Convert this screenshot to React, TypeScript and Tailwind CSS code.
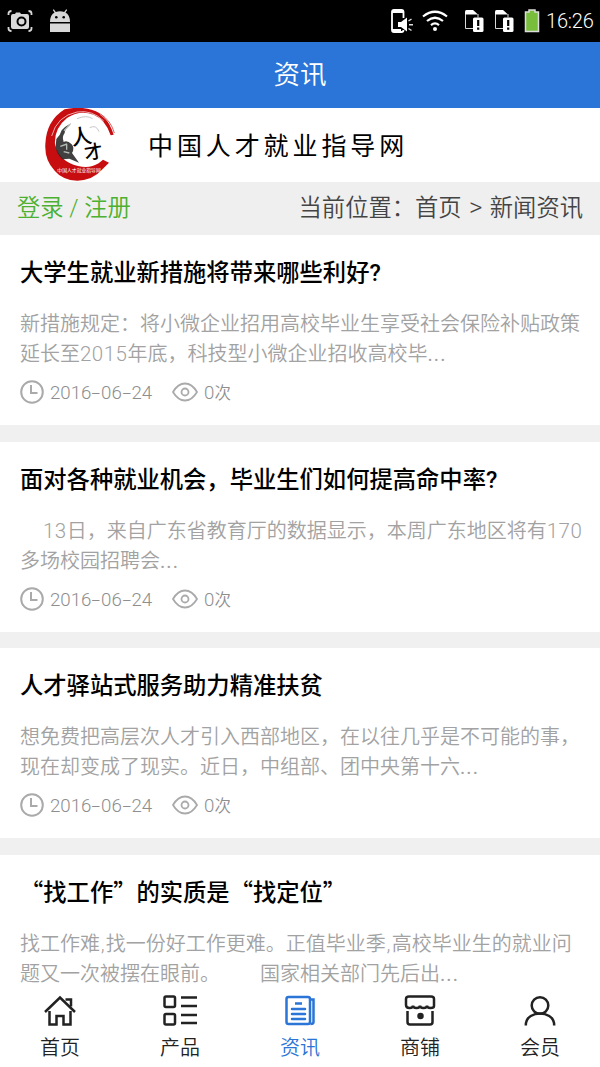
import React from "react";

type Article = {
  title: string;
  lines: string[];
  indent?: boolean;
  date?: string[];
};

const articles: Article[] = [
  {
    title: "大学生就业新措施将带来哪些利好?",
    lines: ["新措施规定：将小微企业招用高校毕业生享受社会保险补贴政策", "延长至2015年底，科技型小微企业招收高校毕..."],
    date: ["2016", "06", "24"],
  },
  {
    title: "面对各种就业机会，毕业生们如何提高命中率?",
    lines: ["13日，来自广东省教育厅的数据显示，本周广东地区将有170", "多场校园招聘会..."],
    indent: true,
    date: ["2016", "06", "24"],
  },
  {
    title: "人才驿站式服务助力精准扶贫",
    lines: ["想免费把高层次人才引入西部地区，在以往几乎是不可能的事，", "现在却变成了现实。近日，中组部、团中央第十六..."],
    date: ["2016", "06", "24"],
  },
  {
    title: "“找工作”的实质是“找定位”",
    lines: ["找工作难,找一份好工作更难。正值毕业季,高校毕业生的就业问", "题又一次被摆在眼前。\u3000\u3000国家相关部门先后出..."],
  },
];

const SimIcon = () => (
  <svg className="h-[24px] w-[20px]" viewBox="0 0 20 24" fill="none">
    <path d="M1 5V2.500Q1 1 2.500 1H9l5 4.500H1z" fill="#fff" />
    <path d="M1.500 5v14.500H9M14 5v3.500" stroke="#d8d8d8" />
    <rect x="9" y="8.500" width="10.500" height="14.500" rx="1.500" fill="#fff" />
    <path d="M14.200 11v6M14.200 18.500v2.200" stroke="#000" strokeWidth="2.200" />
  </svg>
);

const StatusBar = () => (
  <div className="flex h-[42px] shrink-0 items-center bg-black pl-[7px] pr-[6px] text-white">
    <svg className="h-[24px] w-[26px]" viewBox="0 0 26 24" fill="none">
      <path
        d="M1.500 6V4.500q0-2.500 3-2.500M21.500 2q3 0 3 2.500V6M1.500 18v1.500q0 2.500 3 2.500M21.500 22q3 0 3-2.500V18"
        stroke="#d8d8d8"
        strokeWidth="1.800"
      />
      <path d="M6 5h2l1-1.500h4L14 5h6q2 0 2 2v11q0 2-2 2H6q-2 0-2-2V7q0-2 2-2z" fill="#d8d8d8" />
      <circle cx="14.500" cy="12.500" r="4" fill="#d8d8d8" stroke="#000" strokeWidth="2" />
    </svg>
    <svg className="ml-[17px] h-[24px] w-[20px]" viewBox="0 0 20 24">
      <path d="M0 13Q0 6 4.500 3.500L2.800 1l1-.8L5.800 3Q10 1.500 14.200 3l2-2.800 1 .8-1.700 2.500Q20 6 20 13z" fill="#d8d8d8" />
      <path d="M0 14.500h20V23H0z" fill="#d8d8d8" />
      <circle cx="6.300" cy="8.200" r="1.300" />
      <circle cx="13.700" cy="8.200" r="1.300" />
    </svg>
    <div className="ml-auto flex items-center">
      <svg className="h-[24px] w-[23px]" viewBox="0 0 23 24" fill="none">
        <path
          d="M12.500 9V3q0-2-2-2H3Q1 1 1 3v18q0 2 2 2h7.500q2 0 2-2"
          stroke="#fff"
          strokeWidth="1.800"
        />
        <path d="M1 2h11v2H1zM1 20h9v3H1z" fill="#fff" />
        <path d="M7 13h3l6-4.500v14L10 18H7z" fill="#fff" />
        <path d="m17.500 12 3-2M18 15.800h4M17.500 19.500l3 2" stroke="#ddd" strokeWidth="1.500" />
      </svg>
      <svg className="ml-[8px] mr-px h-[24px] w-[26px]" viewBox="0 0 26 24" fill="none" stroke="#fff" strokeWidth="2.200">
        <path d="M1 7.500q12-9.500 24 0M5 12q8-6.500 16 0M9 16.200q4-3.500 8 0" />
        <circle cx="13" cy="20" r="2" fill="#fff" stroke="none" />
      </svg>
      <div className="ml-[15px] flex gap-[10px]">
        <SimIcon />
        <SimIcon />
      </div>
      <svg className="ml-[10px] h-[24px] w-[16px]" viewBox="0 0 16 24">
        <path d="M5 3V1h6v2h3.500v19.500h-13V3z" fill="#78bd3b" stroke="#ddd" strokeWidth="1.500" />
      </svg>
      <span className="ml-[6px] w-[48px] whitespace-nowrap font-['Roboto',sans-serif] text-[20px] leading-none font-light tracking-[-0.2px]">
        16:26
      </span>
    </div>
  </div>
);

const Logo = () => (
  <svg className="h-[74px] w-[74px]" viewBox="40 24 222 222">
    <path
      d="M252 104Q232 42 188 30Q152 18 105 28Q50 62 47 132Q44 180 75 212Q98 240 143 242Q190 240 216 210L238 188L220 179L207 190Q180 207 145 198Q88 185 76 133Q73 85 112 54Q150 29 192 44Q228 59 243 106z"
      fill="#c80d10"
    />
    <path
      d="M66 108Q82 48 142 36Q188 29 222 63M211 43Q244 66 256 96M228 80l12 28"
      fill="none"
      stroke="#fff"
      strokeWidth="2"
    />
    <path d="M212 42Q244 62 254 99" fill="none" stroke="#c80d10" strokeWidth="2" />
    <path
      d="M80 117Q91 108 96 91Q105 80 125 69Q106 85 105 99Q96 110 102 126Q112 119 126 133Q136 144 127 159L148 188L119 176L98 178Q80 162 78 139z"
      fill="#252525"
      opacity=".88"
    />
    <path d="M103 92l19-19M92 139l20-7M102 155l17 4M111 131v18" stroke="#b5bbb5" strokeWidth="4" />
    <path d="M142 56Q170 44 189 56M180 83q20-10 28 12" fill="none" stroke="#aaa" strokeWidth="2" />
    <text x="124" y="133" fontSize="62" fontWeight="500" fontFamily="Noto Sans CJK SC, sans-serif" transform="rotate(-9 150 110)">
      人
    </text>
    <text x="162" y="176" fontSize="56" fontWeight="500" fontFamily="Noto Sans CJK SC, sans-serif" transform="rotate(-9 190 150)">
      才
    </text>
    <text x="83" y="217" fontSize="14.500" fontWeight="400" fill="#fff" fontFamily="Noto Sans CJK SC, sans-serif">
      中国人才就业指导网
    </text>
  </svg>
);

const Dash = () => <span className="inline-block w-[9.600px] scale-x-[1.7] text-center">-</span>;

// Digits and dots are set slightly wider than the Chinese text around them
const Mixed = ({ text }: { text: string }) => (
  <>
    {text.split(/([0-9]+|\.+|,)/).map((part, i) => {
      if (part === ",") {
        return (
          <span key={i} className="ml-[0.700px] tracking-[1.300px]">
            ,
          </span>
        );
      }
      if (part.startsWith(".")) {
        return (
          <span key={i} className="font-normal tracking-[1.100px]">
            {part}
          </span>
        );
      }
      return /^[0-9]+$/.test(part) ? (
        <span key={i} className="text-[20.500px] tracking-[0.500px]">
          {part}
        </span>
      ) : (
        part
      );
    })}
  </>
);

const ArticleCard = ({ article }: { article: Article }) => (
  <article className={`shrink-0 bg-white px-5 pt-5 ${article.date ? "h-[190px]" : "h-[135px]"}`}>
    <h2
      className={`h-[36px] whitespace-nowrap text-[23.300px] font-medium text-black ${
        article.title.startsWith("“") ? "font-['Noto_Sans_CJK_SC',sans-serif] leading-[33px]" : "leading-[36px]"
      }`}
    >
      {article.title}
    </h2>
    <div className="mt-[18px] whitespace-nowrap text-[20px] leading-[30px] text-[#a2a2a2]">
      <p className={article.indent ? "pl-[23px]" : ""}>
        <Mixed text={article.lines[0]} />
      </p>
      <p>
        <Mixed text={article.lines[1]} />
      </p>
    </div>
    {article.date && (
      <div className="mt-[11px] flex h-6 items-center text-[18.700px] text-[#8e8e8e]">
        <svg className="h-6 w-6" viewBox="0 0 24 24" fill="none" stroke="#aaa" strokeWidth="2">
          <circle cx="12" cy="12" r="10.800" />
          <path d="M11 5v8h6.500" />
        </svg>
        <span className="ml-[6px] mt-[2px] w-[103px] whitespace-nowrap">
          {article.date[0]}
          <Dash />
          {article.date[1]}
          <Dash />
          {article.date[2]}
        </span>
        <svg className="ml-[19px] h-6 w-[26px]" viewBox="0 0 26 24" fill="none" stroke="#aaa" strokeWidth="1.800">
          <path d="M1 12Q6 3.500 13 3.500T25 12Q20 20.500 13 20.500T1 12z" />
          <circle cx="13" cy="12" r="3.500" />
        </svg>
        <span className="ml-[6px] mt-[2px]">
          0<span className="text-[16.500px]">次</span>
        </span>
      </div>
    )}
  </article>
);

const tabs = [
  {
    label: "首页",
    icon: (
      <>
        <path d="m1 17 15-14.500L31 17M5.500 16v13.500h7V21h7v8.500h7V16" />
        <path d="M21.500 4.500h5.500v7" />
      </>
    ),
  },
  {
    label: "产品",
    icon: (
      <>
        <rect x="1.500" y="1.500" width="10.500" height="10.500" rx="1.500" />
        <rect x="1.500" y="19" width="10.500" height="10.500" rx="1.500" />
        <path d="M18 2.500h16M18 11h16M18 20h16M18 28h16" />
      </>
    ),
  },
  {
    label: "资讯",
    active: true,
    icon: (
      <>
        <rect x="2.500" y="2" width="23.500" height="27" rx="2" />
        <path d="M26.500 4.500h3V27q0 2-3 2M11 8.500h7" />
        <path d="M8 14h13M8 19h13M8 24h13" strokeLinecap="round" />
      </>
    ),
  },
  {
    label: "商铺",
    icon: (
      <>
        <path d="M2 9V4q0-2.500 3-2.500h22q3 0 3 2.500v7q0 2-3.500 2-3.500 0-3.500-2.500 0 2.500-3.500 2.500T16 10.500q0 2.500-3.500 2.500T9 10.500Q9 13 5.500 13T2 10z" />
        <path d="M3.500 16v11q0 2.500 2.500 2.500h20q2.500 0 2.500-2.500V16" />
        <circle cx="16.500" cy="21" r="2" fill="currentColor" />
      </>
    ),
  },
  {
    label: "会员",
    icon: (
      <>
        <circle cx="16" cy="10.500" r="8.300" />
        <path d="M1.800 30.500q0-6.500 5-9.500 4-2.500 9.200-2.500t9.200 2.500q5 3 5 9.500" />
      </>
    ),
  },
];

export default function App() {
  return (
    <div className="flex h-[1067px] w-[600px] flex-col overflow-hidden bg-white font-['Roboto','Noto_Sans_CJK_SC',sans-serif] font-[350] [text-spacing-trim:space-all]">
      <StatusBar />
      <header className="flex h-[66px] shrink-0 items-center justify-center bg-[#2a75d7] text-[26.500px] text-white">
        资讯
      </header>
      <div className="flex h-[74px] shrink-0 items-center bg-white pl-[43px]">
        <Logo />
        <span className="ml-[31px] mt-[3px] whitespace-nowrap text-[25px] font-normal tracking-[3.900px] text-black">
          中国人才就业指导网
        </span>
      </div>
      <div className="flex h-[53px] shrink-0 items-center justify-between bg-[#efefef] px-[17px] text-[23.300px]">
        <span className="text-[#4cb030]">登录 / 注册</span>
        <span className="text-[#444]">
          当前位置：首页<span className="mx-[1px] text-[26px] leading-none"> &gt; </span>新闻资讯
        </span>
      </div>
      <main className="flex min-h-0 flex-1 flex-col gap-[16.700px] overflow-hidden bg-[#f0f0f0]">
        {articles.map((article) => (
          <ArticleCard key={article.title} article={article} />
        ))}
      </main>
      <nav className="grid h-[77px] shrink-0 grid-cols-5 bg-white">
        {tabs.map((tab) => (
          <div
            key={tab.label}
            className={`flex flex-col items-center pt-[5px] ${tab.active ? "text-[#2a75d7]" : "text-[#222]"}`}
          >
            <svg
              className="h-[31px] w-[34px]"
              viewBox={tab.label === "产品" ? "0 0 34 31" : "-1 0 34 31"}
              fill="none"
              stroke="currentColor"
              strokeWidth="2.500"
            >
              {tab.icon}
            </svg>
            <span className="mt-[7px] text-[20px] leading-[30px]">{tab.label}</span>
          </div>
        ))}
      </nav>
    </div>
  );
}
